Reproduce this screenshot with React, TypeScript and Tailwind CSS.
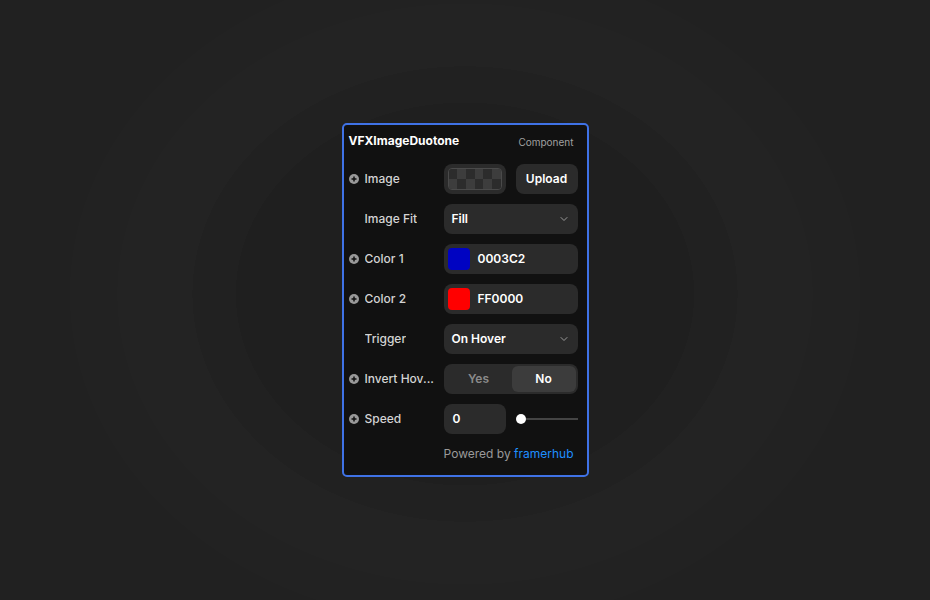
import { ChevronDown } from "lucide-react"

const font = { fontFamily: "Inter, 'Liberation Sans', sans-serif" }

function PlusDot() {
  return (
    <svg width="10" height="10" viewBox="0 0 10 10" className="shrink-0">
      <circle cx="5" cy="5" r="5" fill="#9a9a9a" />
      <path d="M5 2.5v5M2.5 5h5" stroke="#111" strokeWidth="1.5" />
    </svg>
  )
}

function Label({ text, plus }: { text: string; plus?: boolean }) {
  return (
    <div className="flex w-[95px] items-center gap-[6px] text-[12px] font-medium text-[#d4d4d4]">
      {plus ? <PlusDot /> : <span className="w-[10px]" />}
      <span className="truncate">{text}</span>
    </div>
  )
}

function Checker() {
  const cells = Array.from({ length: 12 })
  return (
    <div className="grid h-[22px] w-[54px] grid-cols-6 grid-rows-2 overflow-hidden rounded-[4px] border border-[#4a4a4a]">
      {cells.map((_, i) => {
        const dark = (Math.floor(i / 6) + (i % 6)) % 2 === 0
        return <div key={i} className={dark ? "bg-[#2c2c2c]" : "bg-[#3d3d3d]"} />
      })}
    </div>
  )
}

function Select({ value }: { value: string }) {
  return (
    <div className="flex h-[30px] w-[134px] items-center justify-between rounded-[8px] bg-[#2b2b2b] pl-2 pr-2 text-[12px] font-semibold text-white">
      <span>{value}</span>
      <ChevronDown className="h-3 w-3 text-[#9a9a9a]" strokeWidth={2} />
    </div>
  )
}

function ColorField({ color, hex }: { color: string; hex: string }) {
  return (
    <div className="flex h-[30px] w-[134px] items-center gap-2 rounded-[8px] bg-[#2b2b2b] pl-1 text-[12px] font-semibold text-white">
      <div className={`h-[22px] w-[22px] rounded-[4px] ${color}`} />
      <span>{hex}</span>
    </div>
  )
}

export default function App() {
  return (
    <div
      className="flex h-[600px] w-full items-center justify-center bg-[#212121] bg-[radial-gradient(ellipse_395px_330px_at_50%_49%,#1f1f1f_0%,#1f1f1f_58%,#212121_58%,#212121_69%,#232323_69%,#232323_88%,#222222_88%,#222222_100%,#212121_100%)]"
      style={font}
    >
      <div className="flex h-[354px] w-[247px] flex-col rounded-[5px] border-2 border-[#3f72e6] bg-[#111111] pl-[5px] pr-[9px] pt-[8px]">
        <div className="flex h-4 items-center justify-between">
          <span className="text-[12px] font-bold text-white">VFXImageDuotone</span>
          <span className="mt-[2px] pr-[4px] text-[10px] text-[#a0a0a0]">Component</span>
        </div>

        <div className="mt-[15px] flex flex-col gap-[10px]">
          <div className="flex h-[30px] items-center">
            <Label text="Image" plus />
            <div className="flex gap-[10px]">
              <div className="flex h-[30px] w-[62px] items-center justify-center rounded-[8px] bg-[#2b2b2b]">
                <Checker />
              </div>
              <div className="flex h-[30px] w-[62px] items-center justify-center rounded-[8px] bg-[#2b2b2b] text-[12px] font-semibold text-white">
                Upload
              </div>
            </div>
          </div>

          <div className="flex h-[30px] items-center">
            <Label text="Image Fit" />
            <Select value="Fill" />
          </div>

          <div className="flex h-[30px] items-center">
            <Label text="Color 1" plus />
            <ColorField color="bg-[#0003c2]" hex="0003C2" />
          </div>

          <div className="flex h-[30px] items-center">
            <Label text="Color 2" plus />
            <ColorField color="bg-[#ff0000]" hex="FF0000" />
          </div>

          <div className="flex h-[30px] items-center">
            <Label text="Trigger" />
            <Select value="On Hover" />
          </div>

          <div className="flex h-[30px] items-center">
            <Label text="Invert Hov..." plus />
            <div className="flex h-[30px] w-[134px] items-center rounded-[8px] bg-[#2b2b2b] p-[2px] text-[12px] font-semibold">
              <div className="flex h-full flex-1 items-center justify-center text-[#8a8a8a]">Yes</div>
              <div className="flex h-full w-[64px] items-center justify-center rounded-[6px] bg-[#3c3c3c] text-white">No</div>
            </div>
          </div>

          <div className="flex h-[30px] items-center">
            <Label text="Speed" plus />
            <div className="flex h-[30px] w-[62px] items-center rounded-[8px] bg-[#2b2b2b] pl-[9px] text-[12px] font-semibold text-white">
              0
            </div>
            <div className="ml-[10px] flex flex-1 items-center">
              <div className="h-[10px] w-[10px] rounded-full bg-white" />
              <div className="h-[2px] flex-1 bg-[#444444]" />
            </div>
          </div>
        </div>

        <div className="mt-[12px] flex h-4 items-center justify-end pr-[4px] text-[12px] text-[#9a9a9a]">
          Powered by&nbsp;<span className="text-[#1f8fff]">framerhub</span>
        </div>
      </div>
    </div>
  )
}
